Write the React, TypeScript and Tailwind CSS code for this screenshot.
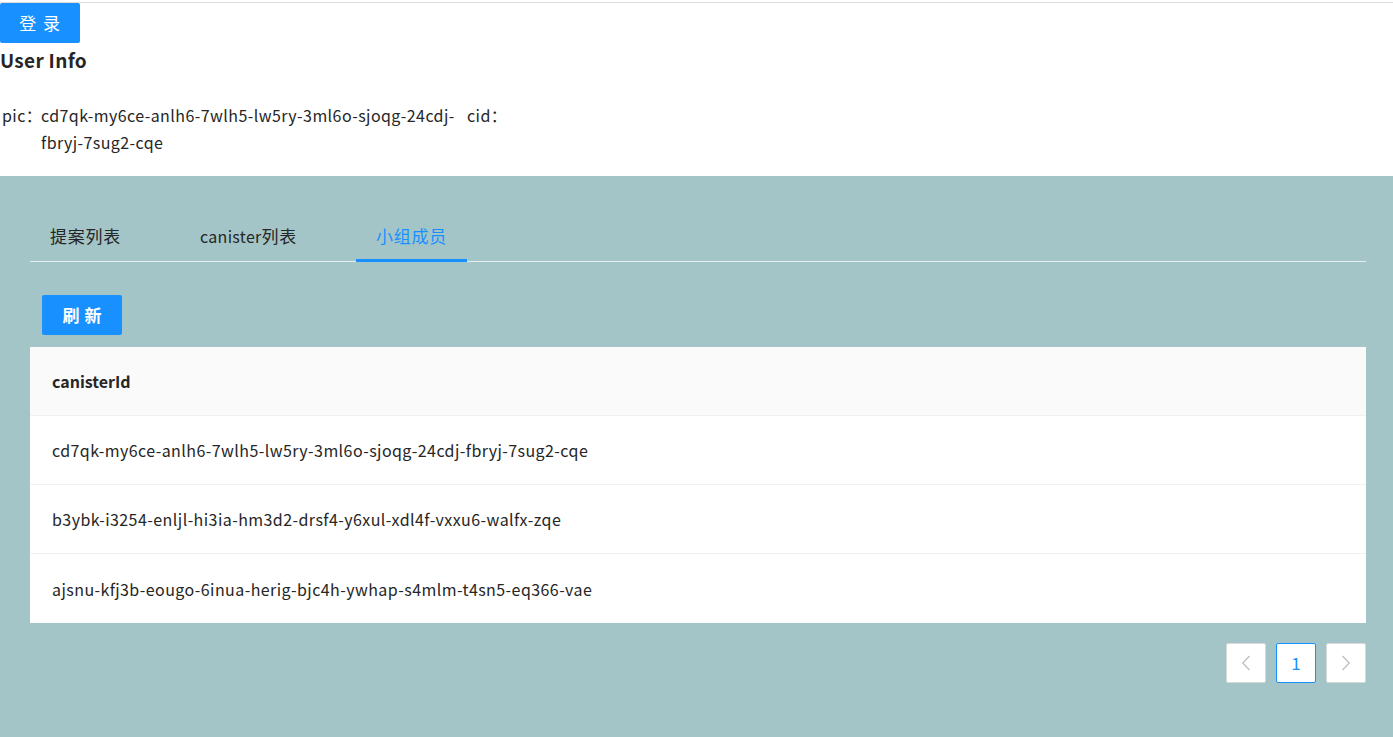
const rows = [
  'cd7qk-my6ce-anlh6-7wlh5-lw5ry-3ml6o-sjoqg-24cdj-fbryj-7sug2-cqe',
  'b3ybk-i3254-enljl-hi3ia-hm3d2-drsf4-y6xul-xdl4f-vxxu6-walfx-zqe',
  'ajsnu-kfj3b-eougo-6inua-herig-bjc4h-ywhap-s4mlm-t4sn5-eq366-vae',
];

const font = "font-['Noto_Sans_CJK_SC',sans-serif]";

function Chevron({ dir }: { dir: 'left' | 'right' }) {
  return (
    <svg width="10" height="16" viewBox="0 0 10 16" fill="none" stroke="currentColor" strokeWidth="1.3">
      {dir === 'left' ? <path d="M8.5 1 L1.8 8 L8.5 15" /> : <path d="M1.5 1 L8.2 8 L1.5 15" />}
    </svg>
  );
}

export default function App() {
  return (
    <div className={`${font} min-h-[737px] flex flex-col bg-white text-[#262626]`}>
      <div className="mt-[2px] border-t border-[#dddddd]">
        <button className="h-[40px] w-[80px] rounded-[2px] bg-[#1890ff] text-[17px] text-white tracking-[0.4em] pl-[6px]">
          登录
        </button>
        <h3 className="mt-[3px] text-[19px] font-bold leading-[28px] tracking-[0.3px]">User Info</h3>
        <div className="mt-[28px] flex w-[540px] text-[16px] leading-[27px] tracking-[0.43px]">
          <span className="w-[41px] shrink-0 pl-[2px]">pic：</span>
          <span className="w-[426px] shrink-0">cd7qk-my6ce-anlh6-7wlh5-lw5ry-3ml6o-sjoqg-24cdj-fbryj-7sug2-cqe</span>
          <span className="shrink-0">cid：</span>
        </div>
      </div>

      <div className="mt-[20px] flex-1 bg-[#a3c5c7] pl-[30px] pr-[27px] pt-[36px] pb-[50px]">
        <div className="flex gap-[39px] border-b border-[#e6eff0] text-[17px] tracking-[0.75px]">
          <div className="px-5 pt-[12px] pb-[13px] leading-[24px]">提案列表</div>
          <div className="px-5 pt-[12px] pb-[13px] leading-[24px]">
            <span className="text-[16px] tracking-[0.3px]">canister</span>列表
          </div>
          <div className="relative px-5 pt-[12px] pb-[13px] leading-[24px] text-[#1890ff]">
            小组成员
            <div className="absolute left-0 right-0 -bottom-px h-[3px] bg-[#1890ff]" />
          </div>
        </div>

        <button className="ml-[12px] mt-[33px] h-[40px] w-[80px] rounded-[2px] bg-[#1890ff] text-[17px] font-bold text-white tracking-[0.3em] pl-[5px]">
          刷新
        </button>

        <div className="mt-[12px] bg-white text-[16px] tracking-[0.43px]">
          <div className="flex h-[69px] items-center border-b border-[#f0f0f0] bg-[#fafafa] px-[22px] font-bold tracking-normal">
            canisterId
          </div>
          {rows.map((r, i) => (
            <div
              key={r}
              className={`flex h-[69px] items-center px-[22px] ${i < rows.length - 1 ? 'border-b border-[#f0f0f0]' : ''}`}
            >
              {r}
            </div>
          ))}
        </div>

        <div className="mt-[20px] flex justify-end gap-[10px]">
          <div className="flex h-[40px] w-[40px] items-center justify-center rounded-[2px] border border-[#d9d9d9] bg-white text-[#bfbfbf]">
            <Chevron dir="left" />
          </div>
          <div className="flex h-[40px] w-[40px] items-center justify-center rounded-[2px] border border-[#1890ff] bg-white text-[17px] text-[#1890ff]">
            1
          </div>
          <div className="flex h-[40px] w-[40px] items-center justify-center rounded-[2px] border border-[#d9d9d9] bg-white text-[#bfbfbf]">
            <Chevron dir="right" />
          </div>
        </div>
      </div>
    </div>
  );
}
